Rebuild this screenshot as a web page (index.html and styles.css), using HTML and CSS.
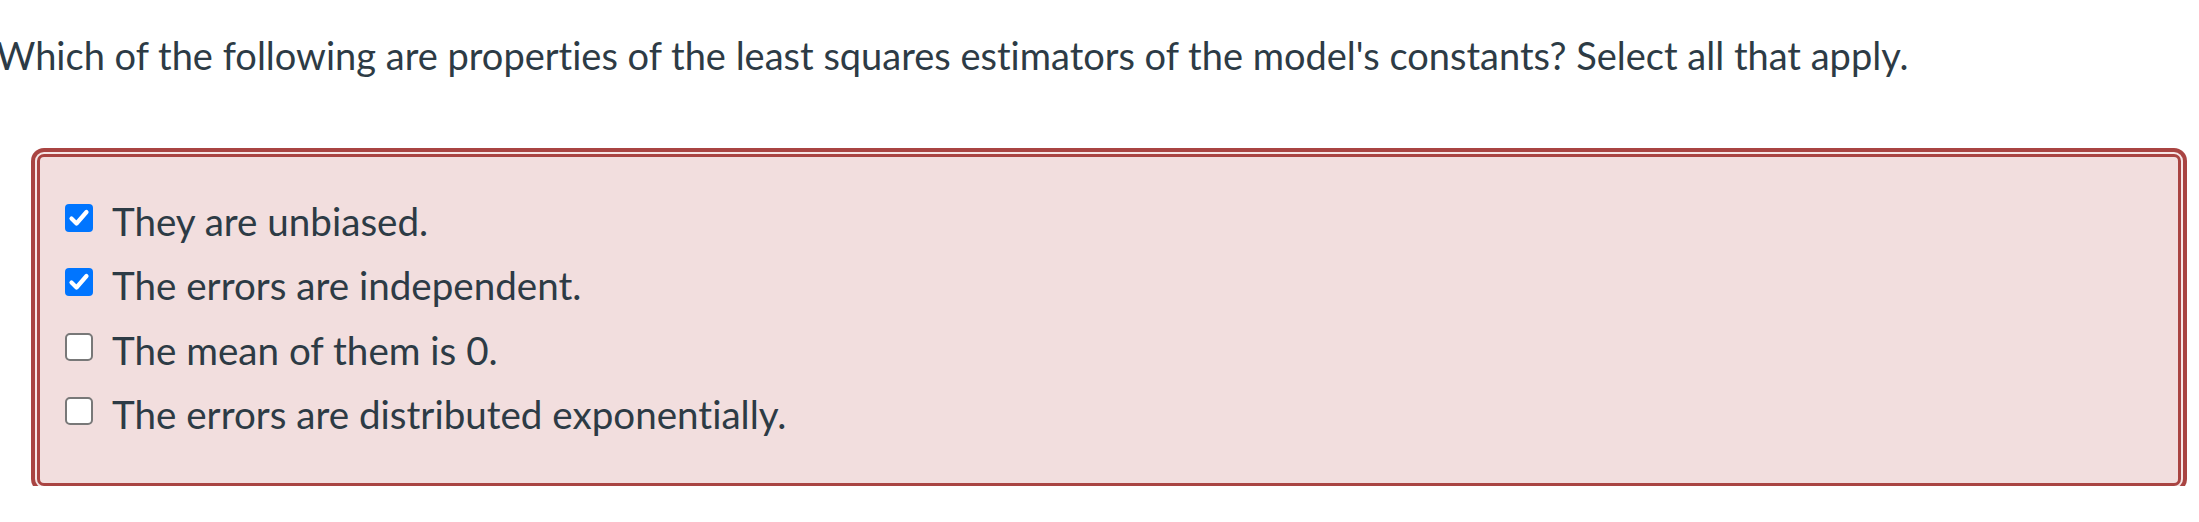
FILE: index.html
```html
<!DOCTYPE html>
<html lang="en">
<head>
<meta charset="utf-8">
<title>Quiz question</title>
<link rel="stylesheet" href="styles.css">
</head>
<body>
<div class="question">
  <p class="question-text">Which of the following are properties of the least squares estimators of the model's constants? Select all that apply.</p>
  <div class="answers">
    <label class="option">
      <span class="box checked"><svg viewBox="0 0 28 28" width="28" height="28"><path d="M6.5 14.5 L11.5 19.5 L21.5 8" fill="none" stroke="#fff" stroke-width="4.2" stroke-linecap="round" stroke-linejoin="round"/></svg></span>
      <span class="label">They are unbiased.</span>
    </label>
    <label class="option">
      <span class="box checked"><svg viewBox="0 0 28 28" width="28" height="28"><path d="M6.5 14.5 L11.5 19.5 L21.5 8" fill="none" stroke="#fff" stroke-width="4.2" stroke-linecap="round" stroke-linejoin="round"/></svg></span>
      <span class="label">The errors are independent.</span>
    </label>
    <label class="option">
      <span class="box"></span>
      <span class="label">The mean of them is 0.</span>
    </label>
    <label class="option">
      <span class="box"></span>
      <span class="label">The errors are distributed exponentially.</span>
    </label>
  </div>
</div>
</body>
</html>
```

FILE: styles.css
```css
html, body {
  margin: 0;
  padding: 0;
  background: #ffffff;
}

body {
  font-family: Lato, "Noto Sans", sans-serif;
  color: #2d3b45;
  overflow: hidden;
  font-variant-ligatures: no-common-ligatures;
  font-feature-settings: "liga" 0, "clig" 0;
}

.question {
  padding-left: 31px;
  padding-right: 12px;
}

.question-text {
  margin: 33px 0 0 -35px;
  font-size: 38px;
  line-height: 1.2;
  white-space: nowrap;
}

.answers {
  margin-top: 75px;
  border: 3px solid #a94442;
  border-radius: 7px;
  box-shadow: 0 0 0 2px #f6e6e6, 0 0 0 6px #a94442;
  margin-left: 6px;
  margin-right: 6px;
  background: #f2dede;
  padding: 32px 20px 36px 25px;
  display: flex;
  flex-direction: column;
}

.option {
  display: flex;
  align-items: center;
  gap: 19px;
  height: 64.5px;
  font-size: 38.6px;
  line-height: 64.5px;
}

.box {
  flex: none;
  width: 28px;
  height: 28px;
  box-sizing: border-box;
  border-radius: 5px;
  background: #ffffff;
  border: 2.5px solid #787878;
  margin-bottom: 6px;
  display: flex;
  align-items: center;
  justify-content: center;
}

.box.checked {
  background: #0075ff;
  border: none;
  border-radius: 4px;
}

.box svg {
  display: block;
}

.label {
  white-space: nowrap;
}
```
